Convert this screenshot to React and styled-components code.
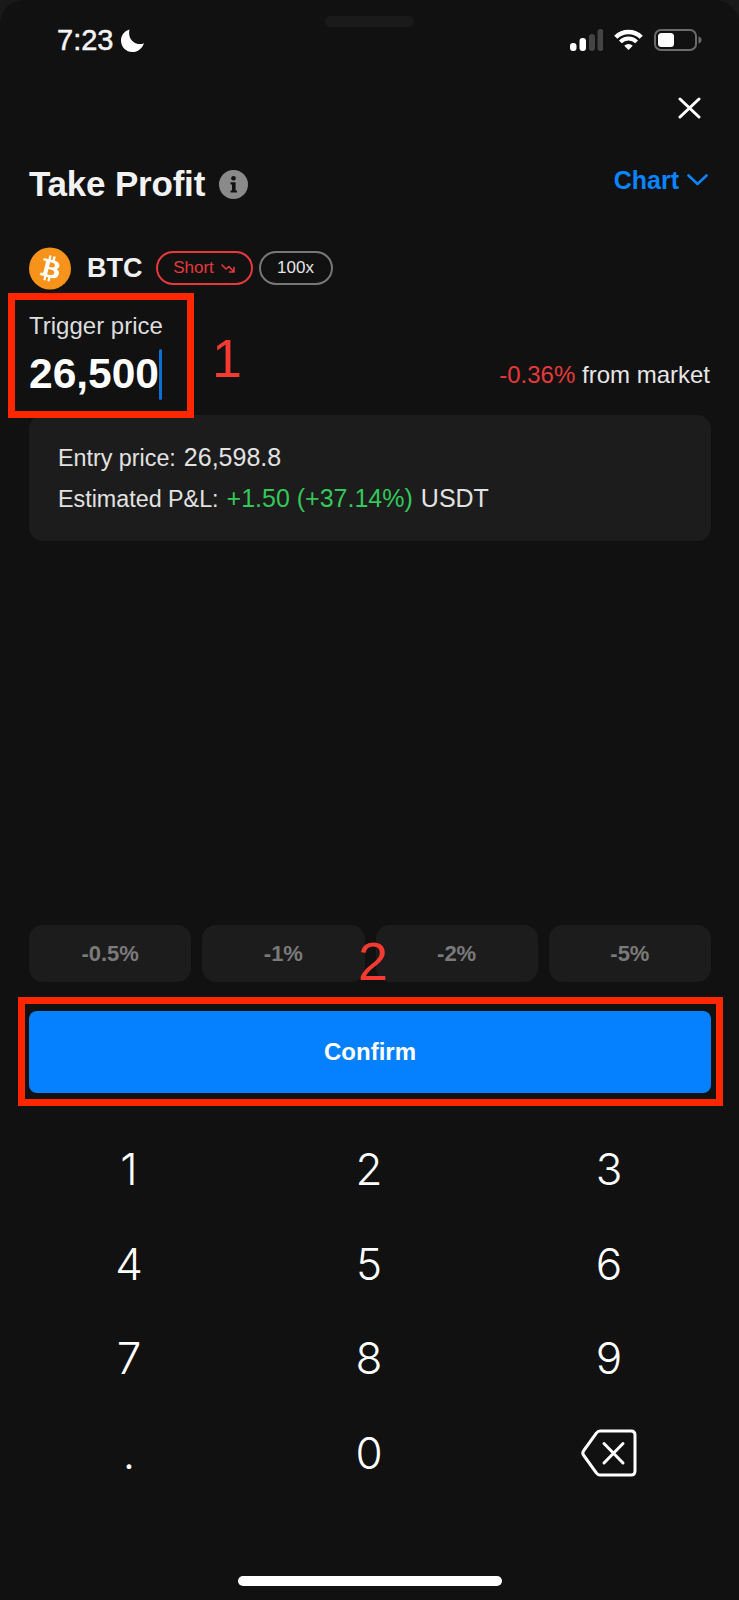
import styled, { createGlobalStyle } from "styled-components";

const GlobalStyle = createGlobalStyle`
  html, body {
    margin: 0;
    padding: 0;
    background: #191919;
  }
  * {
    box-sizing: border-box;
  }
`;

const Screen = styled.div`
  position: relative;
  width: 739px;
  height: 1600px;
  overflow: hidden;
  background: #111111;
  border-radius: 24px 24px 0 0;
  color: #ffffff;
  font-family: "Liberation Sans", Arial, sans-serif;
`;

const Notch = styled.div`
  position: absolute;
  top: 16px;
  left: 325px;
  width: 89px;
  height: 11px;
  border-radius: 6px;
  background: #1a1a1a;
`;

const StatusBar = styled.div`
  display: flex;
  align-items: center;
  justify-content: space-between;
  height: 51px;
  padding: 29px 37px 0 57px;
`;

const Time = styled.div`
  display: flex;
  align-items: center;
  gap: 8px;
  font-size: 29px;
  line-height: 22px;
  -webkit-text-stroke: 0.5px #f4f4f4;
  color: #f4f4f4;
`;

const StatusIcons = styled.div`
  display: flex;
  align-items: center;
  gap: 11px;
`;

const CloseRow = styled.div`
  display: flex;
  justify-content: flex-end;
  padding: 46px 38px 0 0;
`;

const TitleRow = styled.div`
  display: flex;
  align-items: center;
  justify-content: space-between;
  height: 30px;
  margin-top: 50px;
  padding: 0 31px 0 29px;
`;

const TitleGroup = styled.div`
  display: flex;
  align-items: center;
  gap: 14px;
`;

const Title = styled.h1`
  margin: 0;
  font-size: 35px;
  line-height: 30px;
  font-weight: 700;
  letter-spacing: -0.2px;
  color: #f2f2f2;
`;

const ChartLink = styled.div`
  display: flex;
  align-items: center;
  gap: 8px;
  padding-bottom: 8px;
  font-size: 25px;
  line-height: 30px;
  font-weight: 700;
  color: #0a84ff;
`;

const AssetRow = styled.div`
  display: flex;
  align-items: center;
  height: 44px;
  margin-top: 47px;
  padding-left: 29px;
`;

const AssetName = styled.span`
  margin: 0 13px 0 16px;
  font-size: 27px;
  font-weight: 700;
  color: #f0f0f0;
`;

const Pill = styled.span`
  display: inline-flex;
  align-items: center;
  justify-content: center;
  gap: 7px;
  width: ${props => props.$width}px;
  height: 34px;
  margin-right: 6px;
  border: 2px solid ${props => props.$color};
  border-radius: 17px;
  font-size: 17px;
  color: ${props => props.$text};
`;

const PriceRow = styled.div`
  display: flex;
  align-items: flex-end;
  justify-content: space-between;
  height: 89px;
  margin-top: 23px;
  padding: 0 29px;
`;

const PriceGroup = styled.div`
  display: flex;
  flex-direction: column;
  margin-bottom: 1px;
`;

const PriceLabel = styled.div`
  font-size: 24px;
  line-height: 28px;
  color: #dddddd;
`;

const PriceValue = styled.div`
  display: flex;
  align-items: center;
  height: 54px;
  margin-top: 7px;
  font-size: 42.5px;
  font-weight: 700;
`;

const Caret = styled.span`
  width: 3px;
  height: 51px;
  border-radius: 2px;
  background: #0a6fd6;
`;

const FromMarket = styled.div`
  margin-bottom: 12px;
  font-size: 24px;
  line-height: 30px;
  color: #e6e6e6;
`;

const Colored = styled.span`
  color: ${props => props.$color};
`;

const InfoCard = styled.div`
  display: flex;
  flex-direction: column;
  justify-content: center;
  gap: 13px;
  height: 126px;
  margin: 13px 28px 0 29px;
  padding: 0 29px;
  border-radius: 14px;
  background: #1c1c1c;
`;

const InfoLine = styled.div`
  display: flex;
  align-items: baseline;
  gap: 8px;
  font-size: 23.3px;
  line-height: 27px;
  color: #e2e2e2;
`;

const InfoValue = styled.span`
  font-size: 25px;
  color: ${props => props.$color || "#e2e2e2"};
`;

const Presets = styled.div`
  display: grid;
  grid-template-columns: repeat(4, 1fr);
  gap: 11px;
  height: 57px;
  margin: 384px 28px 0 29px;
`;

const Preset = styled.div`
  display: flex;
  align-items: center;
  justify-content: center;
  border-radius: 14px;
  background: #1c1c1c;
  font-size: 22px;
  font-weight: 700;
  color: #7a7a7a;
`;

const ConfirmButton = styled.div`
  display: flex;
  align-items: center;
  justify-content: center;
  height: 82px;
  margin: 29px 28px 0 29px;
  border-radius: 8px;
  background: #0581ff;
  font-size: 24px;
  font-weight: 700;
`;

const Keypad = styled.div`
  display: grid;
  grid-template-columns: repeat(3, 240px);
  grid-auto-rows: 94.5px;
  margin: 29px 0 0 9px;
`;

const Key = styled.div`
  display: flex;
  align-items: center;
  justify-content: center;
  font-family: Inter, sans-serif;
  font-size: 44px;
  font-weight: 300;
  color: #ffffff;
`;

const HomeIndicator = styled.div`
  position: absolute;
  left: 238px;
  bottom: 14px;
  width: 264px;
  height: 10px;
  border-radius: 5px;
  background: #ffffff;
`;

const Highlight = styled.div`
  position: absolute;
  top: ${props => props.$top}px;
  left: ${props => props.$left}px;
  width: ${props => props.$width}px;
  height: ${props => props.$height}px;
  border: 7px solid #ff2600;
`;

const Callout = styled.div`
  position: absolute;
  top: ${props => props.$top}px;
  left: ${props => props.$left}px;
  font-size: 54px;
  line-height: 54px;
  color: #f53a32;
`;

const SignalIcon = () => (
  <svg width="33" height="22" viewBox="0 0 33 22">
    <rect x="0" y="14" width="6.5" height="8" rx="3" fill="#fff" />
    <rect x="9.5" y="9" width="6.5" height="13" rx="3" fill="#fff" />
    <rect x="19" y="5" width="6" height="17" rx="3" fill="#444" />
    <rect x="27.5" y="0" width="6" height="22" rx="3" fill="#444" />
  </svg>
);

const WifiIcon = () => (
  <svg width="29" height="22" viewBox="0 0 29 22" fill="none">
    <path d="M1.77 8.27A18 18 0 0 1 27.23 8.27" stroke="#fff" strokeWidth="4.5" />
    <path d="M6.37 12.87A11.5 11.5 0 0 1 22.63 12.87" stroke="#fff" strokeWidth="4" />
    <path d="M14.5 21L10.26 16.76A6 6 0 0 1 18.74 16.76Z" fill="#fff" />
  </svg>
);

const BatteryIcon = () => (
  <svg width="48" height="22" viewBox="0 0 48 22" fill="none">
    <rect x="1" y="1" width="41" height="20" rx="6" stroke="#6b6b6b" strokeWidth="2" />
    <rect x="4" y="4" width="16" height="14" rx="3.5" fill="#fff" />
    <path d="M44.5 7.5C46.5 8 47.5 9.2 47.5 11C47.5 12.8 46.5 14 44.5 14.5Z" fill="#6b6b6b" />
  </svg>
);

const MoonIcon = () => (
  <svg width="23" height="23" viewBox="0 0 23 23">
    <path d="M8.5 0.5C6.8 7.5 10.5 14 17.5 15C19.5 15.3 21.3 15 23 14.2C21.4 19.4 16.8 23 11.4 23C5 23 0 17.8 0 11.4C0 6.2 3.5 1.8 8.5 0.5Z" fill="#fff" />
  </svg>
);

const CloseIcon = () => (
  <svg width="23" height="22" viewBox="0 0 23 22" fill="none">
    <path d="M2 2L21 20M21 2L2 20" stroke="#fff" strokeWidth="3" strokeLinecap="round" />
  </svg>
);

const InfoIcon = () => (
  <svg width="29" height="29" viewBox="0 0 29 29">
    <circle cx="14.5" cy="14.5" r="14.5" fill="#8a8a8a" />
    <circle cx="14.5" cy="8.2" r="2.3" fill="#111" />
    <path d="M11.5 12.2H16.6V20.4H18V22.6H11.5V20.4H13V14.4H11.5Z" fill="#111" />
  </svg>
);

const ChevronIcon = () => (
  <svg width="21" height="12" viewBox="0 0 21 12" fill="none">
    <path d="M1.5 1.5L10.5 10L19.5 1.5" stroke="#0a84ff" strokeWidth="2.6" strokeLinecap="round" strokeLinejoin="round" />
  </svg>
);

const BitcoinIcon = () => (
  <svg width="42" height="43" viewBox="0 0 32 32">
    <circle cx="16" cy="16" r="16" fill="#f7931a" />
    <path
      fill="#fff"
      d="M23.19 14.02c.31-2.12-1.3-3.26-3.5-4.02l.71-2.86-1.74-.43-.7 2.78c-.46-.11-.93-.22-1.4-.33l.7-2.8-1.74-.43-.71 2.85c-.38-.09-.75-.17-1.11-.26v-.01l-2.4-.6-.46 1.86s1.29.3 1.26.32c.7.18.83.64.81 1.01l-.81 3.25c.05.01.11.03.18.06l-.18-.05-1.14 4.55c-.09.21-.3.53-.79.41.02.03-1.26-.31-1.26-.31l-.86 2 2.26.56c.42.11.83.22 1.24.32l-.72 2.89 1.74.43.71-2.86c.48.13.94.25 1.39.36l-.71 2.85 1.74.43.72-2.88c2.97.56 5.2.34 6.14-2.35.76-2.16-.04-3.41-1.6-4.22 1.14-.26 2-1.01 2.23-2.56zm-3.98 5.58c-.54 2.16-4.18.99-5.36.7l.96-3.83c1.18.3 4.97.88 4.4 3.13zm.54-5.61c-.49 1.97-3.52.97-4.5.72l.87-3.47c.98.25 4.14.7 3.63 2.75z"
    />
  </svg>
);

const TrendDownIcon = () => (
  <svg width="14" height="11" viewBox="0 0 14 11" fill="none">
    <path d="M1 2L5 6L8 3.5L13 9M13 4.5V9H8.5" stroke="#e5393c" strokeWidth="1.6" strokeLinecap="round" strokeLinejoin="round" />
  </svg>
);

const BackspaceIcon = () => (
  <svg width="56" height="48" viewBox="0 0 56 48" fill="none">
    <path
      d="M19 2H50C52.5 2 54 3.5 54 6V42C54 44.5 52.5 46 50 46H19C17.5 46 16.5 45.5 15.5 44L2.8 26.5C1.6 25 1.6 23 2.8 21.5L15.5 4C16.5 2.5 17.5 2 19 2Z"
      stroke="#fff"
      strokeWidth="3"
    />
    <path d="M23 14.5L42 34M42 14.5L23 34" stroke="#fff" strokeWidth="3" strokeLinecap="round" />
  </svg>
);

const presets = ["-0.5%", "-1%", "-2%", "-5%"];
const keys = ["1", "2", "3", "4", "5", "6", "7", "8", "9", ".", "0"];

const App = () => {
  return (
    <Screen>
      <GlobalStyle />
      <Notch />
      <StatusBar>
        <Time>
          7:23
          <MoonIcon />
        </Time>
        <StatusIcons>
          <SignalIcon />
          <WifiIcon />
          <BatteryIcon />
        </StatusIcons>
      </StatusBar>

      <CloseRow>
        <CloseIcon />
      </CloseRow>

      <TitleRow>
        <TitleGroup>
          <Title>Take Profit</Title>
          <InfoIcon />
        </TitleGroup>
        <ChartLink>
          Chart
          <ChevronIcon />
        </ChartLink>
      </TitleRow>

      <AssetRow>
        <BitcoinIcon />
        <AssetName>BTC</AssetName>
        <Pill $width={97} $color="#e5393c" $text="#e5393c">
          Short
          <TrendDownIcon />
        </Pill>
        <Pill $width={74} $color="#777777" $text="#e6e6e6">
          100x
        </Pill>
      </AssetRow>

      <PriceRow>
        <PriceGroup>
          <PriceLabel>Trigger price</PriceLabel>
          <PriceValue>
            26,500
            <Caret />
          </PriceValue>
        </PriceGroup>
        <FromMarket>
          <Colored $color="#e5393c">-0.36%</Colored> from market
        </FromMarket>
      </PriceRow>

      <InfoCard>
        <InfoLine>
          <span>Entry price:</span>
          <InfoValue>26,598.8</InfoValue>
        </InfoLine>
        <InfoLine>
          <span>Estimated P&amp;L:</span>
          <InfoValue $color="#34c759">+1.50 (+37.14%)</InfoValue>
          <InfoValue>USDT</InfoValue>
        </InfoLine>
      </InfoCard>

      <Presets>
        {presets.map(preset => (
          <Preset key={preset}>{preset}</Preset>
        ))}
      </Presets>

      <ConfirmButton>Confirm</ConfirmButton>

      <Keypad>
        {keys.map(key => (
          <Key key={key}>{key}</Key>
        ))}
        <Key>
          <BackspaceIcon />
        </Key>
      </Keypad>

      <HomeIndicator />

      <Highlight $top={293} $left={8} $width={186} $height={125} />
      <Highlight $top={997} $left={18} $width={705} $height={109} />
      <Callout $top={331} $left={212}>1</Callout>
      <Callout $top={934} $left={358}>2</Callout>
    </Screen>
  );
};

export default App;
